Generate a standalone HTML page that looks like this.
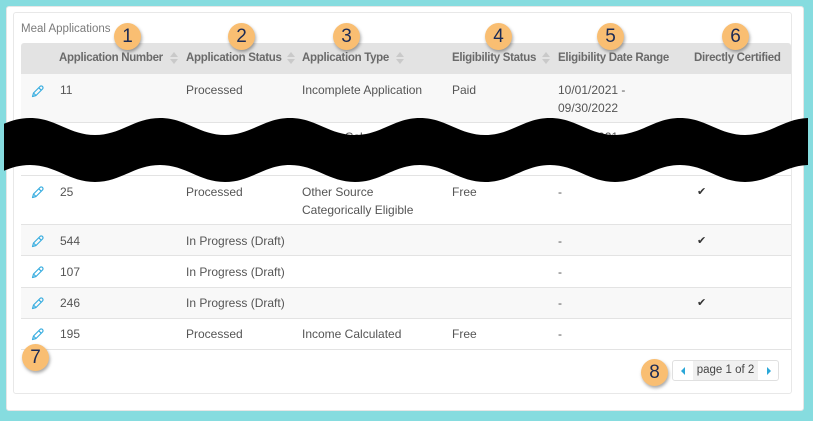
<!DOCTYPE html>
<html><head><meta charset="utf-8"><style>
*{margin:0;padding:0;box-sizing:border-box}
body{width:813px;height:421px;background:#86dcdf;position:relative;overflow:hidden;font-family:"Liberation Sans",sans-serif;font-size:12px;color:#555}
.panel{position:absolute;left:6px;top:6px;width:798px;height:405px;background:#fff;border:1px solid #e6e6e6;border-radius:3px}
.card{position:absolute;left:13px;top:12px;width:779px;height:382px;background:#fff;border:1px solid #e8e8e8;border-radius:3px}
.title{position:absolute;left:21px;top:23px;color:#7b7b7b;font-size:11.5px}
.hdr{position:absolute;left:21px;top:43px;width:770px;height:31px;background:#e3e3e3;border-radius:3px 3px 0 0}
.h{position:absolute;top:52px;font-weight:bold;color:#6a6a6a;font-size:11.5px;letter-spacing:-0.3px}
.sort{position:absolute;top:52px;width:8px;height:14px}
.sort:before{content:"";position:absolute;left:0;top:0;border:4px solid transparent;border-bottom:5px solid #c9c9c9;border-top:0}
.sort:after{content:"";position:absolute;left:0;top:7px;border:4px solid transparent;border-top:5px solid #c9c9c9;border-bottom:0}
.row{position:absolute;left:21px;width:770px;border-bottom:1px solid #e3e3e3}
.g{background:#f8f8f8}
.t{position:absolute;color:#555;line-height:18px;font-size:12px}
.pen{position:absolute;left:30px;width:14px;height:14px}
.chk{position:absolute;left:697px;color:#333;font-size:11px}
.b{position:absolute;width:27px;height:27px;border-radius:50%;background:#f9be72;box-shadow:1px 2px 3px rgba(0,0,0,.35);color:#1b2a55;font-size:19px;text-align:center;line-height:27px}
.pg{position:absolute;left:672px;top:360px;width:107px;height:21px;border:1px solid #e0e0e0;border-radius:3px;background:#fff}
.pg .m{position:absolute;left:20px;top:0;width:65px;height:19px;background:#f0f0f0;color:#444;text-align:center;line-height:19px;font-size:11.5px}
</style></head><body>
<div class="panel"></div>
<div class="card"></div>
<div class="title">Meal Applications</div>
<div class="hdr"></div>
<div class="h" style="left:59px">Application Number</div><div class="sort" style="left:170px"></div>
<div class="h" style="left:186px">Application Status</div><div class="sort" style="left:287px"></div>
<div class="h" style="left:302px">Application Type</div><div class="sort" style="left:396px"></div>
<div class="h" style="left:452px">Eligibility Status</div><div class="sort" style="left:542px"></div>
<div class="h" style="left:558px">Eligibility Date Range</div>
<div class="h" style="left:694px">Directly Certified</div>

<div class="row g" style="top:74px;height:49px"></div>
<div class="row" style="top:123px;height:53px"></div>
<div class="row" style="top:176px;height:49px"></div>
<div class="row g" style="top:225px;height:31px"></div>
<div class="row" style="top:256px;height:32px"></div>
<div class="row g" style="top:288px;height:31px"></div>
<div class="row" style="top:319px;height:31px"></div>

<svg width="0" height="0" style="position:absolute"><defs><g id="p"><path d="M2.5 12.5 L3.5 9 L10 2.5 A1.6 1.6 0 0 1 12.5 5 L6 11.5 Z M8.8 3.8 L11.2 6.2 M3.5 9 L6 11.5" fill="none" stroke="#3aaee0" stroke-width="1.2" stroke-linejoin="round"/></g></defs></svg>
<svg class="pen" style="top:84px"><use href="#p"/></svg>
<svg class="pen" style="top:185px"><use href="#p"/></svg>
<svg class="pen" style="top:234px"><use href="#p"/></svg>
<svg class="pen" style="top:265px"><use href="#p"/></svg>
<svg class="pen" style="top:296px"><use href="#p"/></svg>
<svg class="pen" style="top:327px"><use href="#p"/></svg>

<div class="t" style="left:60px;top:81px">11</div>
<div class="t" style="left:186px;top:81px">Processed</div>
<div class="t" style="left:302px;top:81px">Incomplete Application</div>
<div class="t" style="left:452px;top:81px">Paid</div>
<div class="t" style="left:558px;top:81px">10/01/2021 -<br>09/30/2022</div>

<div class="t" style="left:302px;top:128px">Income Calculated</div>
<div class="t" style="left:558px;top:128px">09/01/2021</div>

<div class="t" style="left:60px;top:183px">25</div>
<div class="t" style="left:186px;top:183px">Processed</div>
<div class="t" style="left:302px;top:183px">Other Source<br>Categorically Eligible</div>
<div class="t" style="left:452px;top:183px">Free</div>
<div class="t" style="left:558px;top:183px">-</div>
<div class="chk" style="top:185px">✔</div>

<div class="t" style="left:60px;top:232px">544</div>
<div class="t" style="left:186px;top:232px">In Progress (Draft)</div>
<div class="t" style="left:558px;top:232px">-</div>
<div class="chk" style="top:234px">✔</div>

<div class="t" style="left:60px;top:263px">107</div>
<div class="t" style="left:186px;top:263px">In Progress (Draft)</div>
<div class="t" style="left:558px;top:263px">-</div>

<div class="t" style="left:60px;top:294px">246</div>
<div class="t" style="left:186px;top:294px">In Progress (Draft)</div>
<div class="t" style="left:558px;top:294px">-</div>
<div class="chk" style="top:296px">✔</div>

<div class="t" style="left:60px;top:325px">195</div>
<div class="t" style="left:186px;top:325px">Processed</div>
<div class="t" style="left:302px;top:325px">Income Calculated</div>
<div class="t" style="left:452px;top:325px">Free</div>
<div class="t" style="left:558px;top:325px">-</div>

<div class="pg"><svg style="position:absolute;left:7px;top:6px" width="6" height="8"><path d="M5 0 L1 4 L5 8Z" fill="#2aa7d8"/></svg><div class="m">page 1 of 2</div><svg style="position:absolute;left:93px;top:6px" width="6" height="8"><path d="M1 0 L5 4 L1 8Z" fill="#2aa7d8"/></svg></div>

<svg style="position:absolute;left:4px;top:0" width="804" height="421" viewBox="4 0 804 421"><path d="M-35,135 C-9,135 4,118 30,118 C56,118 69,135 95,135 C121,135 134,118 160,118 C186,118 199,135 225,135 C251,135 264,118 290,118 C316,118 329,135 355,135 C381,135 394,118 420,118 C446,118 459,135 485,135 C511,135 524,118 550,118 C576,118 589,135 615,135 C641,135 654,118 680,118 C706,118 719,135 745,135 C771,135 784,118 810,118 C836,118 849,135 875,135 L875,182 C849,182 836,165 810,165 C784,165 771,182 745,182 C719,182 706,165 680,165 C654,165 641,182 615,182 C589,182 576,165 550,165 C524,165 511,182 485,182 C459,182 446,165 420,165 C394,165 381,182 355,182 C329,182 316,165 290,165 C264,165 251,182 225,182 C199,182 186,165 160,165 C134,165 121,182 95,182 C69,182 56,165 30,165 C4,165 -9,182 -35,182 Z" fill="#000"/></svg>

<div class="b" style="left:114px;top:23px">1</div>
<div class="b" style="left:228px;top:23px">2</div>
<div class="b" style="left:333px;top:23px">3</div>
<div class="b" style="left:485px;top:23px">4</div>
<div class="b" style="left:597px;top:23px">5</div>
<div class="b" style="left:722px;top:23px">6</div>
<div class="b" style="left:22px;top:344px">7</div>
<div class="b" style="left:641px;top:359px">8</div>
</body></html>
